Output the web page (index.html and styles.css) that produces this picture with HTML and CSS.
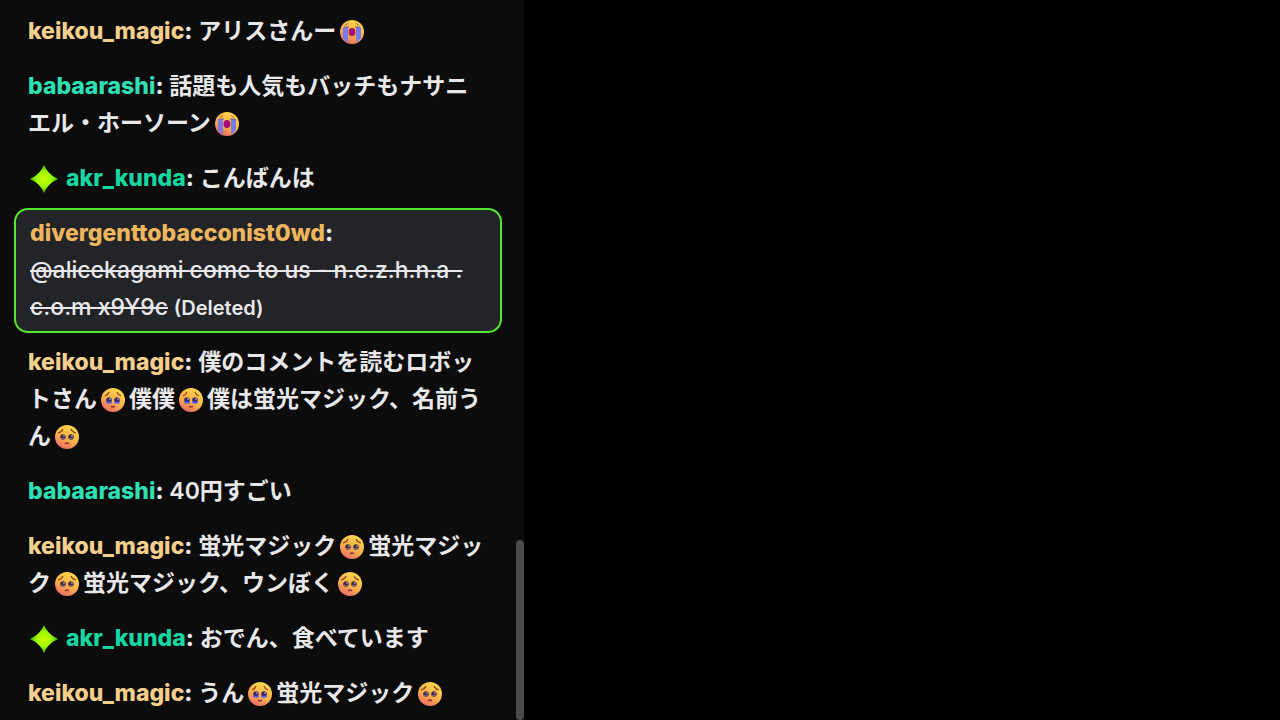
FILE: index.html
```
<!DOCTYPE html>
<html lang="ja">
<head>
    <meta charset="UTF-8">
    <meta name="viewport" content="width=device-width, initial-scale=1.0">
    <title>Chat</title>
    <link rel="stylesheet" href="styles.css">
</head>
<body>

    <!-- Shared emotes and badge -->
    <svg class="defs" aria-hidden="true">
        <defs>
            <linearGradient id="face" x1="0.7" y1="0" x2="0.2" y2="1">
                <stop offset="0" stop-color="#ffd84a"/>
                <stop offset="0.55" stop-color="#f9b04a"/>
                <stop offset="1" stop-color="#e8626c"/>
            </linearGradient>
            <radialGradient id="spark">
                <stop offset="0" stop-color="#c8ff00"/>
                <stop offset="0.5" stop-color="#a4f800"/>
                <stop offset="1" stop-color="#3fbd10"/>
            </radialGradient>
        </defs>
        <symbol id="cry" viewBox="0 0 24 24">
            <circle cx="12" cy="12" r="12" fill="url(#face)"/>
            <path d="M5 5 Q7 5 8 3 M19 5 Q17 5 16 3" stroke="#b5652d" stroke-width="1" fill="none"/>
            <path d="M3 7 H8 V22 Q5 21 3 18 Z" fill="#7a7be8"/>
            <path d="M16 7 H21 V18 Q19 21 16 22 Z" fill="#7a7be8"/>
            <path d="M4 7 H9 M15 7 H20" stroke="#7d5a8c" stroke-width="1.2"/>
            <ellipse cx="12" cy="12" rx="3.4" ry="4" fill="#a80d72"/>
        </symbol>
        <symbol id="tears" viewBox="0 0 24 24">
            <circle cx="12" cy="12" r="12" fill="url(#face)"/>
            <path d="M4 8 Q7 7 8 4 M20 8 Q17 7 16 4" stroke="#8a4526" stroke-width="1.2" fill="none"/>
            <circle cx="8" cy="12" r="2.8" fill="#3d2968"/>
            <circle cx="16" cy="12" r="2.8" fill="#3d2968"/>
            <path d="M5 13 Q8 15 11 13 V15 Q8 17 5 15 Z M13 13 Q16 15 19 13 V15 Q16 17 13 15 Z" fill="#6a68e0"/>
            <circle cx="9" cy="11" r="0.7" fill="#fff"/>
            <circle cx="17" cy="11" r="0.7" fill="#fff"/>
            <path d="M10 18 Q12 20 14 18" stroke="#8f2a3c" stroke-width="1.3" fill="none"/>
        </symbol>
        <symbol id="plead" viewBox="0 0 24 24">
            <circle cx="12" cy="12" r="12" fill="url(#face)"/>
            <path d="M3 8 Q7 7 8 4 M21 8 Q17 7 16 4" stroke="#8a4526" stroke-width="1.2" fill="none"/>
            <circle cx="8" cy="12" r="2.8" fill="#43283f"/>
            <circle cx="16" cy="12" r="2.8" fill="#43283f"/>
            <path d="M6 13 Q8 15 10 13 M14 13 Q16 15 18 13" stroke="#8d72a8" stroke-width="1" fill="none"/>
            <circle cx="9" cy="11" r="0.7" fill="#fff"/>
            <circle cx="17" cy="11" r="0.7" fill="#fff"/>
            <path d="M10 19 Q12 17 14 19" stroke="#8f2a3c" stroke-width="1.3" fill="none"/>
        </symbol>
        <symbol id="badge" viewBox="0 0 30 30">
            <path d="M15 0 Q19 10 30 15 Q19 20 15 30 Q11 20 0 15 Q11 10 15 0 Z" fill="url(#spark)"/>
        </symbol>
    </svg>

    <div class="page">
        <main class="chat">
            <div class="messages">
                <p class="message"><span class="name gold">keikou_magic</span><b class="colon">:</b> アリスさんー<svg class="emote" role="img" aria-label="cry"><use href="#cry"/></svg></p>
                <p class="message"><span class="name mint">babaarashi</span><b class="colon">:</b> 話題も人気もバッチもナサニエル・ホーソーン<svg class="emote" role="img" aria-label="cry"><use href="#cry"/></svg></p>
                <p class="message"><svg class="badge" role="img" aria-label="badge"><use href="#badge"/></svg><span class="name green">akr_kunda</span><b class="colon">:</b> こんばんは</p>
                <p class="message deleted"><span class="name orange">divergenttobacconist0wd</span><b class="colon">:</b> <del>@alicekagami come to us - n.e.z.h.n.a . c.o.m x9Y9c</del> <small>(Deleted)</small></p>
                <p class="message"><span class="name gold">keikou_magic</span><b class="colon">:</b> 僕のコメントを読むロボットさん<svg class="emote" role="img" aria-label="tears"><use href="#tears"/></svg>僕僕<svg class="emote" role="img" aria-label="tears"><use href="#tears"/></svg>僕は蛍光マジック、名前うん<svg class="emote" role="img" aria-label="plead"><use href="#plead"/></svg></p>
                <p class="message"><span class="name mint">babaarashi</span><b class="colon">:</b> 40円すごい</p>
                <p class="message"><span class="name gold">keikou_magic</span><b class="colon">:</b> 蛍光マジック<svg class="emote" role="img" aria-label="plead"><use href="#plead"/></svg>蛍光マジック<svg class="emote" role="img" aria-label="plead"><use href="#plead"/></svg>蛍光マジック、ウンぼく<svg class="emote" role="img" aria-label="plead"><use href="#plead"/></svg></p>
                <p class="message"><svg class="badge" role="img" aria-label="badge"><use href="#badge"/></svg><span class="name green">akr_kunda</span><b class="colon">:</b> おでん、食べています</p>
                <p class="message"><span class="name gold">keikou_magic</span><b class="colon">:</b> うん<svg class="emote" role="img" aria-label="tears"><use href="#tears"/></svg>蛍光マジック<svg class="emote" role="img" aria-label="plead"><use href="#plead"/></svg></p>
            </div>
            <div class="track"><div class="thumb"></div></div>
        </main>
    </div>

</body>
</html>
```
FILE: styles.css
```
body {
    margin: 0;
    background-color: #000;
    color: #e8e8ea;
    font-family: Inter, "Noto Sans CJK JP", sans-serif;
    font-size: 23px;
    font-weight: 600;
    line-height: 37px;
}

.defs {
    position: absolute;
    width: 0;
    height: 0;
}

.page {
    display: flex;
    height: 100vh;
    overflow: hidden;
}

.chat {
    display: flex;
    width: 40.9%;
    background-color: #0c0c0c;
}

.messages {
    flex: 1;
    padding-top: 4px;
}

.message {
    margin: 0;
    padding: 9px 28px;
}

.name,
.colon {
    font-weight: 800;
}

.gold {
    color: #f5cf8c;
}

.mint {
    color: #30dfb2;
}

.green {
    color: #16d7a2;
}

.orange {
    color: #efb65e;
}

.deleted {
    margin: 2px 14px;
    padding: 5px 14px;
    border: 2px solid #56e62e;
    border-radius: 14px;
    background-color: #232428;
}

del {
    font-weight: 500;
    text-decoration-thickness: 2px;
}

small {
    font-size: 20px;
    line-height: 20px;
}

.emote {
    width: 24px;
    height: 24px;
    margin: 0 4px;
    vertical-align: -5px;
}

.badge {
    width: 28px;
    height: 28px;
    margin: 0 8px 0 2px;
    vertical-align: -7px;
}

.track {
    display: flex;
    flex-direction: column;
    justify-content: flex-end;
    width: 8px;
}

.thumb {
    height: 25%;
    border-radius: 4px;
    background-color: #4b4b4b;
}
```
